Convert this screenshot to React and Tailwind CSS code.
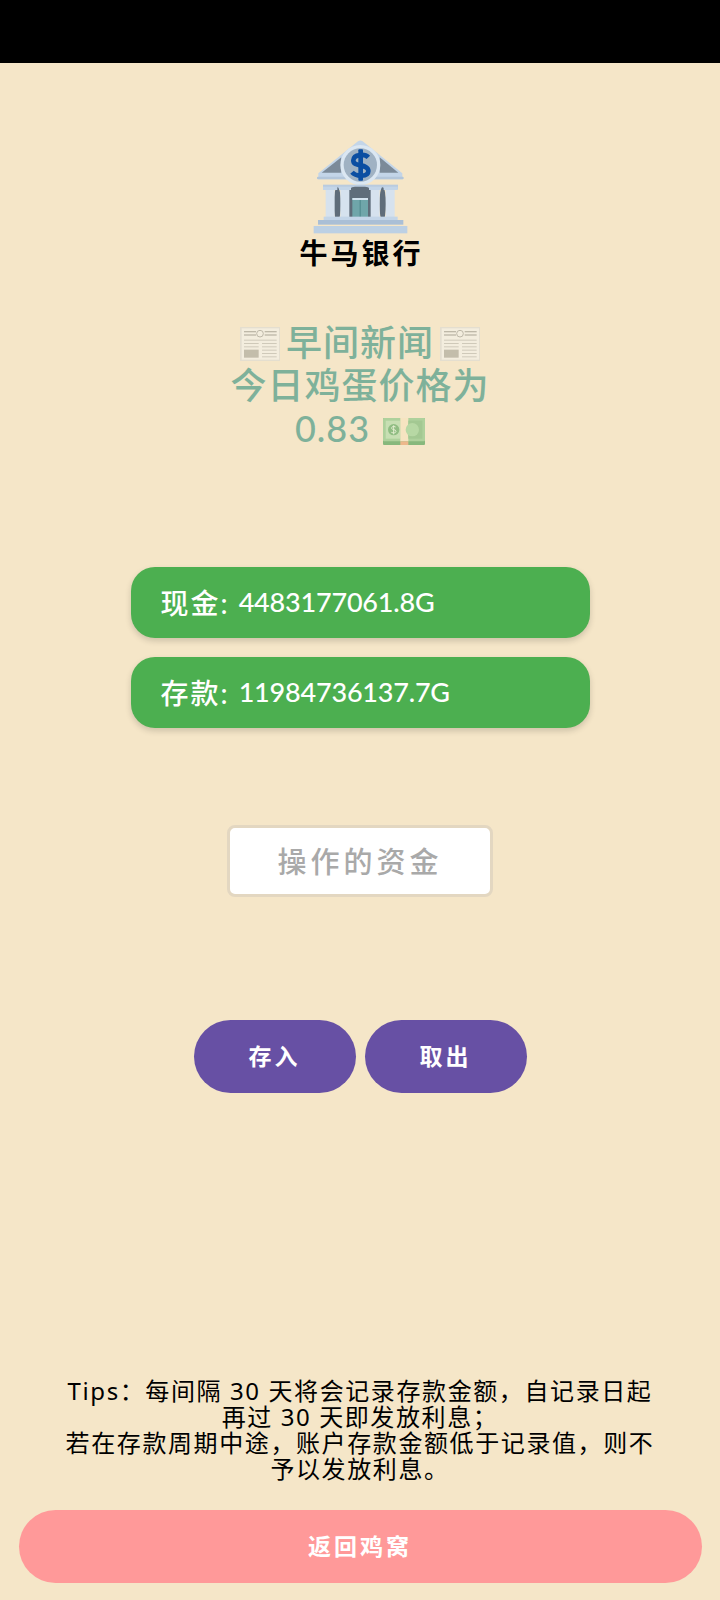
const cjk = "font-['Lato','Noto_Sans_CJK_SC',sans-serif]";

const BankIcon = () => (
  <svg width="95" height="95" viewBox="160 60 285 285">
    <path d="M176 160 L295 64 Q302 59 309 64 L428 160 L428 178 L176 178 Z" fill="#c3d5e8" />
    <path d="M186 158 L245 112 L245 158 Z" fill="#7b8a99" />
    <path d="M360 112 L416 158 L360 158 Z" fill="#7b8a99" />
    <rect x="172" y="170" width="260" height="8" rx="3" fill="#b3c6da" />
    <circle cx="302" cy="135" r="60" fill="#dbe7f2" />
    <circle cx="302" cy="135" r="50" fill="#a0b2c3" />
    <path d="M326 112 C316 101 282 102 281 121 C280 143 326 129 326 153 C326 172 288 170 277 157" fill="none" stroke="#0b4ea2" strokeWidth="14" />
    <rect x="296" y="88" width="14" height="94" rx="3" fill="#0b4ea2" />
    <rect x="190" y="194" width="225" height="14" fill="#b9cbdf" />
    <rect x="264" y="200" width="74" height="104" rx="22" fill="#5f6d7a" />
    <ellipse cx="233" cy="252" rx="11" ry="50" fill="#5f6d7a" />
    <ellipse cx="369" cy="252" rx="10" ry="50" fill="#5f6d7a" />
    <rect x="278" y="234" width="47" height="70" fill="#6fa6aa" />
    <rect x="278" y="234" width="47" height="6" fill="#d3e3ee" />
    <rect x="300" y="240" width="3" height="64" fill="#4d868b" />
    <rect x="198" y="210" width="27" height="86" fill="#d6e2ee" />
    <rect x="242" y="210" width="27" height="86" fill="#d6e2ee" />
    <rect x="333" y="210" width="27" height="86" fill="#d6e2ee" />
    <rect x="378" y="210" width="27" height="86" fill="#d6e2ee" />
    <rect x="190" y="200" width="43" height="10" fill="#c3d5e8" />
    <rect x="238" y="200" width="36" height="10" fill="#c3d5e8" />
    <rect x="328" y="200" width="36" height="10" fill="#c3d5e8" />
    <rect x="372" y="200" width="42" height="10" fill="#c3d5e8" />
    <rect x="192" y="290" width="222" height="10" fill="#c3d5e8" />
    <rect x="175" y="300" width="256" height="14" fill="#aabfd6" />
    <rect x="162" y="318" width="281" height="22" fill="#bcd0e4" />
  </svg>
);

const NewspaperIcon = ({ className }) => (
  <svg width="40" height="34" viewBox="0 0 120 102" className={`inline-block align-[-5px] ${className}`}>
    <rect x="0" y="0" width="120" height="102" fill="#d9d9d4" />
    <rect x="5" y="4" width="112" height="94" fill="#f2f2ee" />
    <rect x="12" y="12" width="36" height="4" fill="#9a9a94" />
    <rect x="12" y="22" width="36" height="4" fill="#9a9a94" />
    <circle cx="60" cy="20" r="10" fill="none" stroke="#9a9a94" strokeWidth="3" />
    <rect x="74" y="12" width="36" height="4" fill="#9a9a94" />
    <rect x="74" y="22" width="36" height="4" fill="#9a9a94" />
    <rect x="12" y="38" width="98" height="3" fill="#b7b7b0" />
    <rect x="12" y="48" width="44" height="3" fill="#b7b7b0" />
    <rect x="12" y="58" width="44" height="3" fill="#b7b7b0" />
    <rect x="12" y="68" width="44" height="24" fill="#a3a298" />
    <rect x="66" y="48" width="44" height="3" fill="#b7b7b0" />
    <rect x="66" y="58" width="44" height="3" fill="#b7b7b0" />
    <rect x="66" y="68" width="44" height="3" fill="#b7b7b0" />
    <rect x="66" y="78" width="44" height="3" fill="#b7b7b0" />
    <rect x="66" y="88" width="44" height="3" fill="#b7b7b0" />
  </svg>
);

const MoneyIcon = () => (
  <svg width="42" height="27" viewBox="0 0 126 81" className="ml-[3px] inline-block align-[-3px]">
    <rect x="0" y="0" width="126" height="81" rx="3" fill="#3f9a4a" />
    <rect x="0" y="0" width="126" height="70" rx="3" fill="#7fc47f" />
    <rect x="8" y="8" width="44" height="54" fill="#a9dba6" />
    <circle cx="32" cy="35" r="17" fill="#4ea356" />
    <path d="M38 27 C32 23 25 26 26 31 C27 37 39 33 39 40 C39 45 31 46 25 43 M32 22 L32 49" fill="none" stroke="#d9f2d6" strokeWidth="3" />
    <rect x="52" y="0" width="24" height="70" fill="#f7e3bd" />
    <rect x="52" y="70" width="24" height="11" fill="#e89a63" />
    <rect x="76" y="8" width="42" height="54" fill="#6db56f" />
    <circle cx="88" cy="35" r="20" fill="#8fcf8d" />
  </svg>
);

const BalanceCard = ({ label, value }) => (
  <div className="flex h-[71px] w-[459px] items-center rounded-[24px] bg-[#4caf50] pl-[30px] font-medium text-white shadow-[0_3px_6px_rgba(0,0,0,0.16)]">
    <span className="whitespace-pre text-[28px] tracking-[2px]">{label}: </span>
    <span className="text-[27px] tracking-[-0.2px]">{value}G</span>
  </div>
);

const ActionButton = ({ children }) => (
  <button className="flex h-[73px] w-[162px] items-center justify-center rounded-full bg-[#6750a4] text-[23px] font-bold tracking-[3px] text-white">
    {children}
  </button>
);

export default function App() {
  return (
    <div className={`flex h-[1600px] flex-col items-center overflow-hidden bg-[#f5e6c8] ${cjk}`}>
      <div className="h-[63px] w-full shrink-0 bg-black" />

      <div className="mt-[77px]">
        <BankIcon />
      </div>
      <div className="mt-[1px] pl-[3px] text-[28px] font-bold leading-[34px] tracking-[3px] text-black">牛马银行</div>

      <div className="mt-[51px] text-center text-[36px] font-medium leading-[43px] tracking-[1px] text-[#308f7d] opacity-60">
        <div><NewspaperIcon className="mr-[6px]" />早间新闻<NewspaperIcon className="ml-[6px]" /></div>
        <div>今日鸡蛋价格为</div>
        <div>0.83 <MoneyIcon /></div>
      </div>

      <div className="mt-[117px] flex flex-col gap-[19px]">
        <BalanceCard label="现金" value="4483177061.8" />
        <BalanceCard label="存款" value="11984736137.7" />
      </div>

      <input
        placeholder="操作的资金"
        className="mt-[97px] h-[72px] w-[266px] rounded-[8px] border-[3px] border-[#e3d7c1] bg-white text-center text-[29px] font-medium tracking-[4px] outline-none placeholder:text-[#a9a9a9]"
      />

      <div className="mt-[123px] flex gap-[9px]">
        <ActionButton>存入</ActionButton>
        <ActionButton>取出</ActionButton>
      </div>

      <div className="mt-[285px] w-[620px] text-center font-['Noto_Sans','Noto_Sans_CJK_SC',sans-serif] text-[24px] font-normal leading-[26px] tracking-[1.6px] text-black">
        Tips：每间隔 30 天将会记录存款金额，自记录日起<br />
        再过 30 天即发放利息；<br />
        若在存款周期中途，账户存款金额低于记录值，则不<br />
        予以发放利息。
      </div>

      <button className="mt-[28px] flex h-[73px] w-[683px] shrink-0 items-center justify-center rounded-full bg-[#ff9999] text-[23px] font-bold tracking-[3px] text-white">
        返回鸡窝
      </button>
    </div>
  );
}
